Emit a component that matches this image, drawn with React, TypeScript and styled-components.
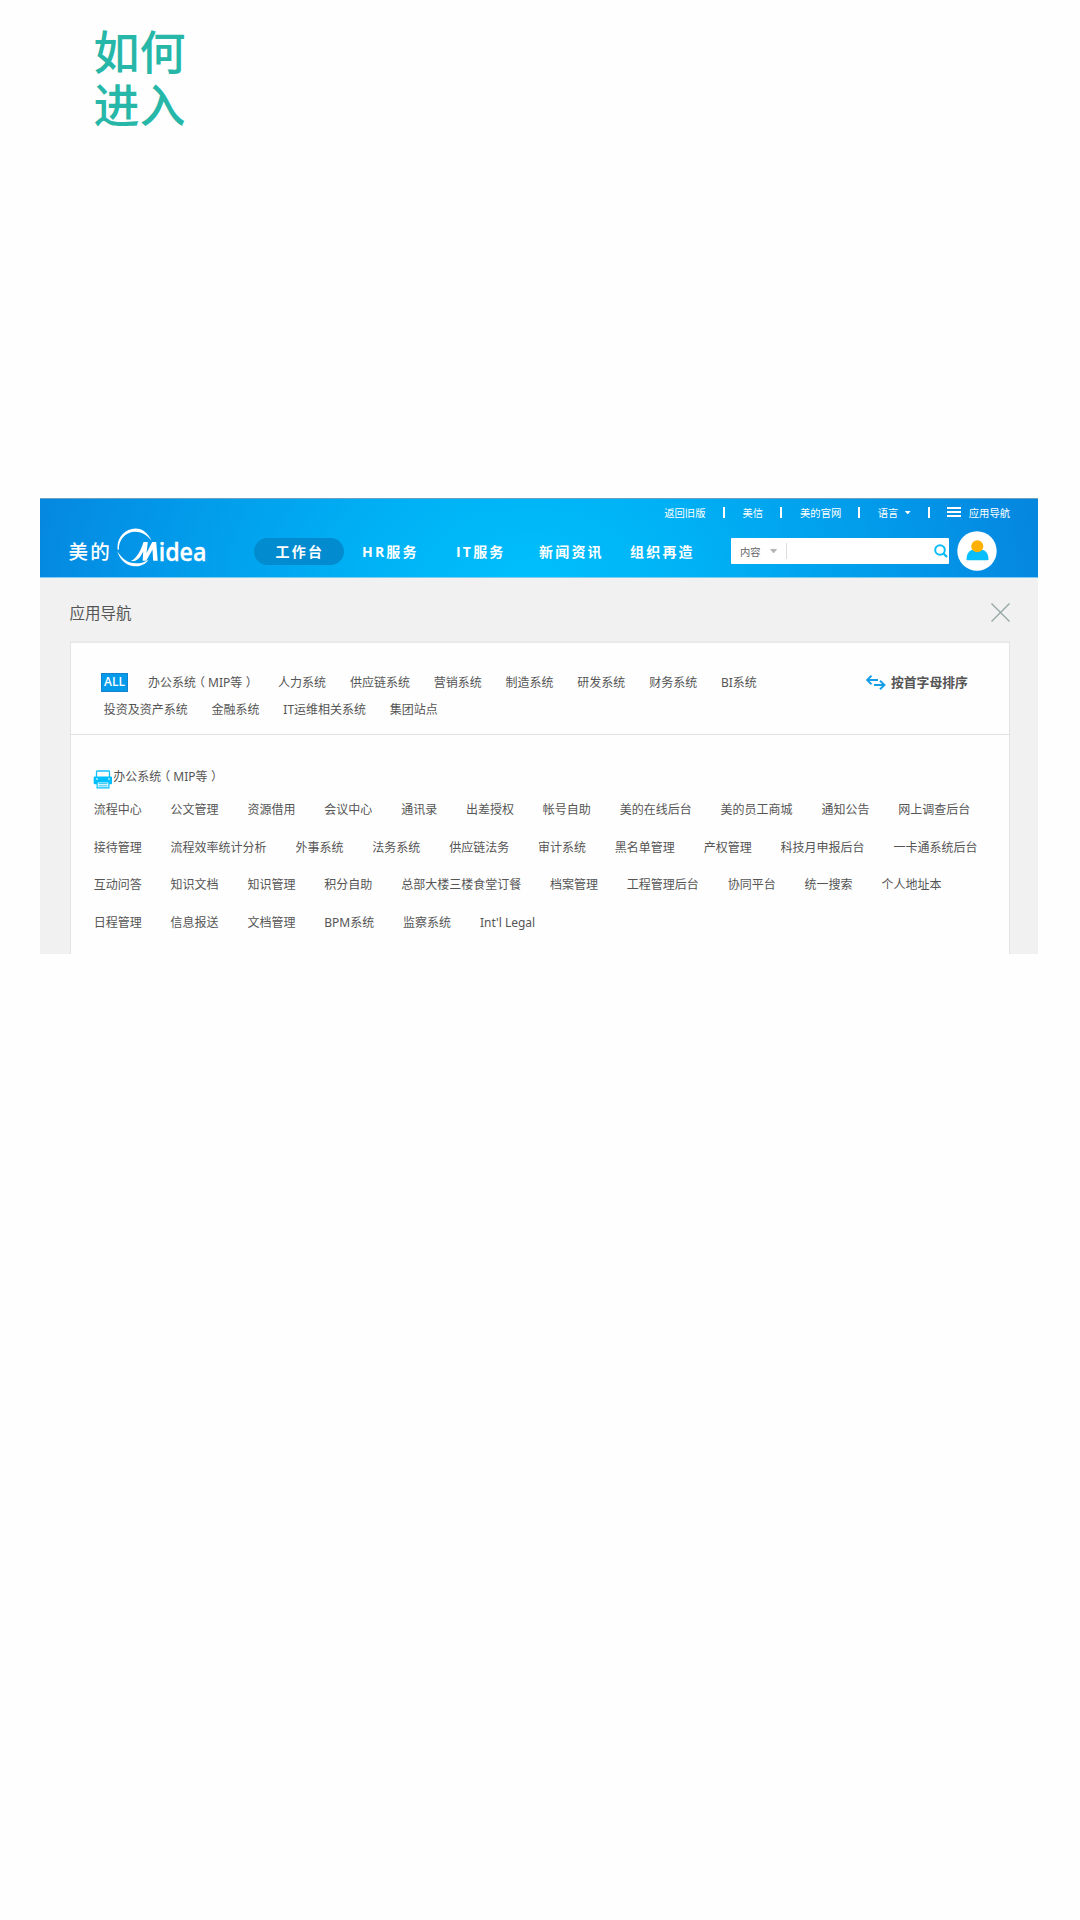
import React from "react";
import styled, { createGlobalStyle } from "styled-components";

const GlobalStyle = createGlobalStyle`
  * { box-sizing: border-box; }
  body {
    margin: 0;
    background: #fefefe;
    font-family: "Open Sans", "Noto Sans CJK SC", sans-serif;
    color: #555;
  }
`;

const Page = styled.main`
  width: 1080px;
  height: 1920px;
  padding: 23px 42px 0 40px;
  background: #fefefe;
  overflow: hidden;
`;

const PageTitle = styled.h1`
  width: 100px;
  height: 475px;
  margin: 0 0 0 53.5px;
  font: 500 46px/52.5px "Noto Sans CJK SC", sans-serif;
  color: #27b7a8;
`;

const Portal = styled.section`
  height: 456px;
  display: flex;
  flex-direction: column;
  background: #f1f1f1;
`;

const Header = styled.header`
  height: 80px;
  flex: none;
  border-top: 1px solid #6c9fc0;
  border-bottom: 1px solid #7fcdf5;
  background: radial-gradient(ellipse 510px 330px at 490px 80px, #00bffc 0%, #00b2f5 32%, #0298e9 74%, #0587df 100%);
  color: #fff;
`;

const UtilityBar = styled.div`
  display: flex;
  align-items: center;
  justify-content: flex-end;
  height: 28px;
  padding: 0 28px 1px 0;
  font-size: 10.3px;
  line-height: 14px;
`;

const Separator = styled.i<{ $left: number; $right: number }>`
  width: 2px;
  height: 11px;
  margin: 0 ${(p) => p.$right}px 0 ${(p) => p.$left}px;
  background: #fff;
`;

const Caret = styled.i<{ $size: number; $color: string; $gap: number }>`
  width: ${(p) => p.$size * 2}px;
  height: ${(p) => p.$size * 1.2}px;
  margin-left: ${(p) => p.$gap}px;
  background: ${(p) => p.$color};
  clip-path: polygon(0 0, 100% 0, 50% 100%);
`;

const Burger = styled.i`
  display: flex;
  flex-direction: column;
  justify-content: space-between;
  width: 14px;
  height: 10px;
  margin: 0 7.5px 2px 0;
`;

const BurgerLine = styled.i`
  height: 2px;
  background: #fff;
`;

const MainBar = styled.div`
  display: flex;
  align-items: center;
  height: 48px;
  padding-left: 28.5px;
`;

const Brand = styled.div`
  width: 185.5px;
  height: 40px;
  display: flex;
  align-items: center;
  font: 500 19.5px/28px "Noto Sans CJK SC", sans-serif;
  letter-spacing: 2.3px;
`;

const BrandMark = styled.svg`
  width: 100px;
  height: 40px;
  margin: 0 0 10px 5.1px;
  overflow: visible;
  letter-spacing: 0;
`;

const Nav = styled.nav`
  width: 477px;
  display: flex;
  align-items: center;
  font: 700 14px/27px "Open Sans", "Noto Sans CJK SC", sans-serif;
  letter-spacing: 2.2px;
  white-space: nowrap;
`;

const NavItem = styled.a<{ $width: number; $active?: boolean }>`
  width: ${(p) => p.$width}px;
  height: 27px;
  padding-left: ${(p) => (p.$active ? 21.5 : 18)}px;
  border-radius: 14px;
  background: ${(p) => (p.$active ? "#038bcf" : "transparent")};
`;

const SearchBox = styled.div`
  width: 218px;
  height: 26px;
  display: flex;
  align-items: center;
  padding: 0 1px 0 9px;
  border-radius: 1px;
  background: #fff;
  color: #666;
  font-size: 10.3px;
`;

const SearchInput = styled.div`
  flex: 1;
  height: 16px;
  margin-left: 8px;
  border-left: 1px solid #ddd;
`;

const Avatar = styled.svg`
  width: 40px;
  height: 40px;
  margin-left: 7.8px;
`;

const TitleRow = styled.div`
  height: 63px;
  flex: none;
  display: flex;
  align-items: center;
  justify-content: space-between;
  padding: 6px 28px 0 29.5px;
  font-size: 15.5px;
  line-height: 22px;
`;

const Panel = styled.div`
  flex: 1;
  margin: 0 28px 0 30px;
  border: 1px solid #e3e3e3;
  border-top: 2px solid #e9e9e9;
  border-bottom: 0;
  background: #fefefe;
  font-family: "Noto Sans", "Noto Sans CJK SC", sans-serif;
  font-size: 12px;
  line-height: 18px;
  white-space: nowrap;
`;

const Filters = styled.div`
  display: flex;
  height: 92px;
  padding: 26px 0 0 30px;
  border-bottom: 1px solid #e2e2e2;
`;

const FilterList = styled.div`
  width: 765px;
`;

const FilterRow = styled.div<{ $indent?: number }>`
  display: flex;
  align-items: center;
  gap: 23.8px;
  height: 27.5px;
  padding-left: ${(p) => p.$indent ?? 0}px;
`;

const AllTag = styled.b`
  width: 27px;
  height: 19px;
  margin: 0 -3.8px 0 0;
  border: 1px solid #1482cc;
  background: #039be9;
  color: #fff;
  font-family: "Open Sans", sans-serif;
  font-weight: 600;
  line-height: 16px;
  text-align: center;
`;

const SortButton = styled.div`
  display: flex;
  align-items: center;
  gap: 5px;
  height: 26px;
  font-size: 12.8px;
  font-weight: 700;
`;

const GroupTitle = styled.div`
  display: flex;
  align-items: flex-start;
  height: 32px;
  margin: 33px 0 0 22.3px;
`;

const PrinterIcon = styled.svg`
  width: 20px;
  height: 19px;
  margin-top: 2px;
`;

const AppRow = styled.div`
  display: flex;
  align-items: center;
  gap: 28.85px;
  height: 37.6px;
  padding-left: 22.7px;
`;

const AppGrid = styled.div`
  margin-top: -8.5px;
`;

/* Full-width brackets are drawn in the middle of their cell. */
const Bracket = styled.span<{ $shift: number }>`
  margin: 0 ${(p) => -p.$shift}px 0 ${(p) => p.$shift}px;
`;

const rows = [
  ["流程中心", "公文管理", "资源借用", "会议中心", "通讯录", "出差授权", "帐号自助", "美的在线后台", "美的员工商城", "通知公告", "网上调查后台"],
  ["接待管理", "流程效率统计分析", "外事系统", "法务系统", "供应链法务", "审计系统", "黑名单管理", "产权管理", "科技月申报后台", "一卡通系统后台"],
  ["互动问答", "知识文档", "知识管理", "积分自助", "总部大楼三楼食堂订餐", "档案管理", "工程管理后台", "协同平台", "统一搜索", "个人地址本"],
  ["日程管理", "信息报送", "文档管理", "BPM系统", "监察系统", "Int'l Legal"],
];

const OfficeLabel = () => (
  <span>
    办公系统<Bracket $shift={-3}>（</Bracket>MIP等<Bracket $shift={3.5}>）</Bracket>
  </span>
);

export default function App() {
  return (
    <Page>
      <GlobalStyle />
      <PageTitle>如何进入</PageTitle>
      <Portal>
        <Header>
          <UtilityBar>
            <span>返回旧版</span>
            <Separator $left={17.5} $right={17.5} />
            <span>美信</span>
            <Separator $left={17} $right={18} />
            <span>美的官网</span>
            <Separator $left={17} $right={17.5} />
            <span>语言</span>
            <Caret $size={3.3} $color="#fff" $gap={6.1} />
            <Separator $left={16.8} $right={17.5} />
            <Burger>
              <BurgerLine />
              <BurgerLine />
              <BurgerLine />
            </Burger>
            <span>应用导航</span>
          </UtilityBar>
          <MainBar>
            <Brand>
              美的
              <BrandMark viewBox="0 0 100 40" fill="#fff">
                <path d="M34.500 14.500C31 7.200 25.500 2.600 18.500 2.600C8.500 2.600 .5 11 .5 21C.5 22 .5 23 .8 24L1.900 23.500C1.500 14 8.500 6.300 17 5.800C24 5.500 29.500 8.800 34.500 14.500Z" />
                <path d="M.3 25C2.800 34.500 10.500 40.300 18 40.300C24.500 40.300 29 37.900 31.500 33.700C28 36.200 24 37.300 19 37.300C11 37.300 4.500 32.500 .3 25Z" />
                <path d="M14 35.100C20 32 24 24 26.500 16H30.800L29.500 27L35.200 16H39.200L40.700 34.700H36.200L35.500 23.500L29.300 34.700H25.700L26.200 25.500C23.500 31.500 20 35.800 14 35.100Z" />
                <text x="41.700" y="34.700" fontFamily="Open Sans" fontSize="24.500" fontWeight="600" stroke="#fff" strokeWidth=".3" textLength="47.800" lengthAdjust="spacingAndGlyphs">idea</text>
              </BrandMark>
            </Brand>
            <Nav>
              <NavItem $width={90} $active>工作台</NavItem>
              <NavItem $width={94}>HR服务</NavItem>
              <NavItem $width={83}>IT服务</NavItem>
              <NavItem $width={91}>新闻资讯</NavItem>
              <NavItem $width={100}>组织再造</NavItem>
            </Nav>
            <SearchBox>
              <span>内容</span>
              <Caret $size={4} $color="#b5b5b5" $gap={9} />
              <SearchInput />
              <svg width="14" height="14" viewBox="0 0 14 14" fill="none" stroke="#0bbcf5" strokeWidth="2">
                <circle cx="6" cy="6" r="4.800" />
                <path d="M9.500 9.500L13 13" strokeWidth="2.400" />
              </svg>
            </SearchBox>
            <Avatar viewBox="0 0 40 40">
              <circle cx="20" cy="20" r="19.700" fill="#fff" />
              <path d="M9.500 28.500C9.500 22 13 18.800 17 18.800H24C28 18.800 31.500 22 31.500 28.500Q31.500 29.200 30.500 29.200H10.500Q9.500 29.200 9.500 28.500Z" fill="#08bffc" />
              <circle cx="20.300" cy="15.200" r="6" fill="#ffb000" />
            </Avatar>
          </MainBar>
        </Header>
        <TitleRow>
          <span>应用导航</span>
          <svg width="19" height="19" viewBox="0 0 19 19" stroke="#93a6a4" strokeWidth="1.300">
            <path d="M.5 .5L18.500 18.500M18.500 .5L.5 18.500" />
          </svg>
        </TitleRow>
        <Panel>
          <Filters>
            <FilterList>
              <FilterRow>
                <AllTag>ALL</AllTag>
                <OfficeLabel />
                {["人力系统", "供应链系统", "营销系统", "制造系统", "研发系统", "财务系统", "BI系统"].map((t) => (
                  <span key={t}>{t}</span>
                ))}
              </FilterRow>
              <FilterRow $indent={2.7}>
                {["投资及资产系统", "金融系统", "IT运维相关系统", "集团站点"].map((t) => (
                  <span key={t}>{t}</span>
                ))}
              </FilterRow>
            </FilterList>
            <SortButton>
              <svg width="20" height="16" viewBox="0 0 20 16" fill="none" stroke="#169fe7" strokeWidth="1.900">
                <path d="M5.500 1.700L1 6L5.500 10.300M1.500 6H12M14 6.700L18.500 11L14 15.300M18 11H8" />
              </svg>
              按首字母排序
            </SortButton>
          </Filters>
          <GroupTitle>
            <PrinterIcon viewBox="0 0 20 19">
              <path d="M3.500 7V1.700Q3.500 1 4.200 1H15.800Q16.500 1 16.500 1.700V7" fill="none" stroke="#16c0fc" strokeWidth="1.300" />
              <path d="M2 6.500H18Q19 6.500 19 7.500V13Q19 14.300 18 14.300H16.500V18.500H3.500V14.300H2Q.7 14.300 .7 13V7.500Q.7 6.500 2 6.500Z" fill="#00bfff" />
              <path d="M4.700 12.500H15.300V17.300H4.700ZM3 8.500H5V9.500H3ZM15 8.500H17V9.500H15Z" fill="#fff" />
              <path d="M5.500 13.700H14.500M5.500 15.900H14.500" stroke="#16c0fc" />
            </PrinterIcon>
            <OfficeLabel />
          </GroupTitle>
          <AppGrid>
            {rows.map((row) => (
              <AppRow key={row[0]}>
                {row.map((t) => (
                  <span key={t}>{t}</span>
                ))}
              </AppRow>
            ))}
          </AppGrid>
        </Panel>
      </Portal>
    </Page>
  );
}
